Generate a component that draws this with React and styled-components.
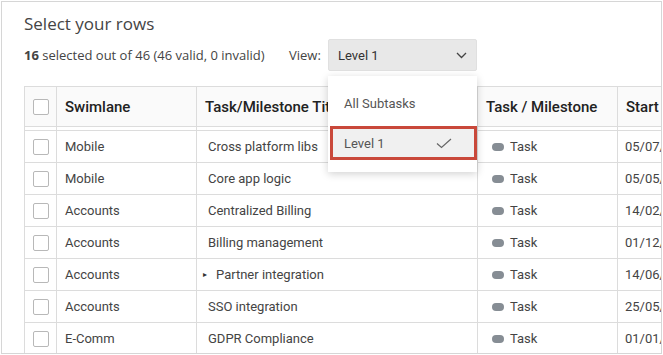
import styled, { createGlobalStyle } from 'styled-components';

const GlobalStyle = createGlobalStyle`
  body {
    margin: 0;
    background: #ffffff;
    font-family: Roboto, "Liberation Sans", sans-serif;
  }
`;

const ROWS = [
  { id: 1, swimlane: 'Mobile', title: 'Cross platform libs', start: '05/07/' },
  { id: 2, swimlane: 'Mobile', title: 'Core app logic', start: '05/05/' },
  { id: 3, swimlane: 'Accounts', title: 'Centralized Billing', start: '14/02/' },
  { id: 4, swimlane: 'Accounts', title: 'Billing management', start: '01/12/' },
  { id: 5, swimlane: 'Accounts', title: 'Partner integration', start: '14/06/', nested: true },
  { id: 6, swimlane: 'Accounts', title: 'SSO integration', start: '25/05/' },
  { id: 7, swimlane: 'E-Comm', title: 'GDPR Compliance', start: '01/01/' },
];

const Chevron = () => (
  <svg width="11" height="7" viewBox="0 0 11 7">
    <polyline points="1,1 5.5,5.5 10,1" fill="none" stroke="#444" strokeWidth="1.3" />
  </svg>
);

const Check = () => (
  <svg width="16" height="11" viewBox="0 0 16 11">
    <polyline points="1,5.5 5.5,9.5 15,1" fill="none" stroke="#666" strokeWidth="1.2" />
  </svg>
);

const App = () => {
  return (
    <>
      <GlobalStyle />
      <Frame>
        <Heading>Select your rows</Heading>
        <Toolbar>
          <Summary>
            <b>16</b> selected out of 46 (46 valid, 0 invalid)
          </Summary>
          <ViewLabel>View:</ViewLabel>
          <SelectWrap>
            <Select>
              <span>Level 1</span>
              <Chevron />
            </Select>
            <Menu>
              <MenuItem>All Subtasks</MenuItem>
              <MenuItem $selected>
                <span>Level 1</span>
                <Check />
              </MenuItem>
            </Menu>
          </SelectWrap>
        </Toolbar>
        <Grid>
          <HeadCell>
            <Box />
          </HeadCell>
          <HeadCell>Swimlane</HeadCell>
          <HeadCell>Task/Milestone Title</HeadCell>
          <HeadCell>Task / Milestone</HeadCell>
          <HeadCell>Start</HeadCell>
          {[0, 1, 2, 3, 4].map((i) => (
            <Spacer key={i} />
          ))}
          {ROWS.map((row) => (
            <Row key={row.id}>
              <Cell $pad={8}>
                <Box />
              </Cell>
              <Cell $pad={8}>{row.swimlane}</Cell>
              <Cell $pad={11}>
                {row.nested && <Caret>▸</Caret>}
                {row.title}
              </Cell>
              <Cell $pad={11}>
                <Pill />
                Task
              </Cell>
              <Cell $pad={7}>{row.start}</Cell>
            </Row>
          ))}
        </Grid>
      </Frame>
    </>
  );
};

const Frame = styled.div`
  position: relative;
  box-sizing: border-box;
  width: 661px;
  height: 353px;
  margin: 1px 0 0 1px;
  padding: 10px 0 0 22px;
  border: 1px solid #d6d6d6;
  overflow: hidden;
`;

const Heading = styled.h1`
  margin: 0;
  font-family: "Open Sans", sans-serif;
  font-size: 17px;
  font-weight: 400;
  line-height: 24px;
  color: #444;
`;

const Toolbar = styled.div`
  display: flex;
  align-items: center;
  height: 32px;
  margin-top: 3px;
`;

const Summary = styled.div`
  width: 265px;
  font-family: "Open Sans", sans-serif;
  font-size: 13px;
  color: #444;
  white-space: nowrap;

  b {
    font-weight: 700;
  }
`;

const ViewLabel = styled.div`
  width: 39px;
  font-family: "Open Sans", sans-serif;
  font-size: 13px;
  color: #444;
`;

const SelectWrap = styled.div`
  position: relative;
`;

const Select = styled.div`
  box-sizing: border-box;
  width: 149px;
  height: 32px;
  padding: 0 9px 0 9px;
  display: flex;
  align-items: center;
  justify-content: space-between;
  background: #e8e8e8;
  border: 1px solid #e0e0e0;
  border-radius: 2px;
  font-size: 13px;
  color: #333;
`;

const Menu = styled.div`
  position: absolute;
  top: 37px;
  left: 0;
  z-index: 2;
  box-sizing: border-box;
  width: 149px;
  padding: 8px 0 12px 2px;
  background: #fff;
  box-shadow: 0 2px 8px rgba(0, 0, 0, 0.18);
`;

const MenuItem = styled.div`
  box-sizing: border-box;
  display: flex;
  align-items: center;
  justify-content: space-between;
  height: ${({ $selected }) => ($selected ? '34px' : '38px')};
  margin-bottom: ${({ $selected }) => ($selected ? '0' : '4px')};
  padding: ${({ $selected }) => ($selected ? '0 22px 0 11px' : '0 0 0 14px')};
  font-size: 13px;
  color: #555;
  background: ${({ $selected }) => ($selected ? '#f0f0f0' : '#fff')};
  border: ${({ $selected }) => ($selected ? '3px solid #c9483a' : 'none')};
`;

const Grid = styled.div`
  display: grid;
  grid-template-columns: 32px 140px 281px 140px 140px;
  grid-auto-rows: auto;
  width: 734px;
  margin-top: 15px;
  border-top: 1px solid #dcdcdc;
  border-left: 1px solid #dcdcdc;
`;

const HeadCell = styled.div`
  box-sizing: border-box;
  height: 40px;
  display: flex;
  align-items: center;
  padding-left: 8px;
  background: #fafafa;
  border-right: 1px solid #dcdcdc;
  border-bottom: 1px solid #dcdcdc;
  font-size: 15px;
  font-weight: 500;
  color: #222;
  white-space: nowrap;
  overflow: hidden;
`;

const Spacer = styled.div`
  height: 3px;
  border-right: 1px solid #dcdcdc;
  border-bottom: 1px solid #dcdcdc;
`;

const Row = styled.div`
  display: contents;
`;

const Cell = styled.div`
  box-sizing: border-box;
  height: 32px;
  display: flex;
  align-items: center;
  padding-left: ${({ $pad }) => $pad}px;
  border-right: 1px solid #dcdcdc;
  border-bottom: 1px solid #dcdcdc;
  font-size: 13px;
  color: #444;
  white-space: nowrap;
  overflow: hidden;
`;

const Box = styled.span`
  box-sizing: border-box;
  width: 16px;
  height: 16px;
  border: 1px solid #b8b8b8;
  border-radius: 2px;
  background: #fff;
`;

const Caret = styled.span`
  margin: 0 9px 0 -5px;
  font-size: 8px;
  color: #333;
`;

const Pill = styled.span`
  width: 12px;
  height: 8px;
  margin: 0 6px 0 3px;
  border-radius: 4px;
  background: #868d94;
`;

export default App;
